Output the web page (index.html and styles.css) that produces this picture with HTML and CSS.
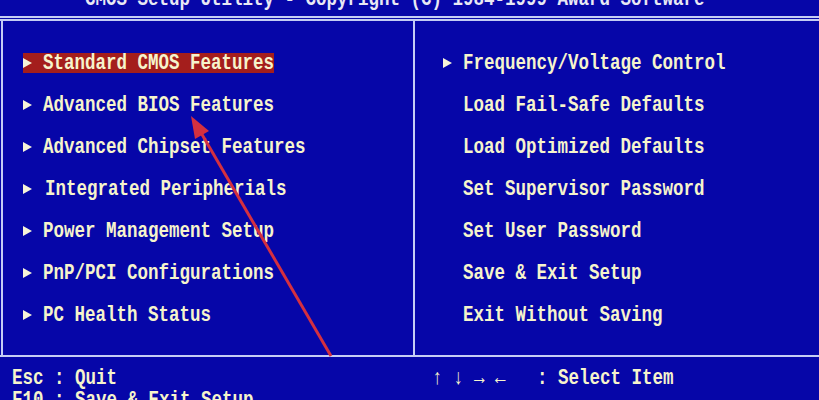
FILE: index.html
```html
<!DOCTYPE html>
<html>
<head>
<meta charset="utf-8">
<link rel="stylesheet" href="styles.css">
</head>
<body>
<div class="screen">
  <div class="title"><span class="t">CMOS Setup Utility - Copyright (C) 1984-1999 Award Software</span></div>
  <div class="main">
    <ul class="col left">
      <li class="item"><span class="sel"><svg class="arr" viewBox="0 0 9 10"><polygon points="0,0 9,5 0,10"/></svg><span class="t">Standard CMOS Features</span></span></li>
      <li class="item"><span class="opt"><svg class="arr" viewBox="0 0 9 10"><polygon points="0,0 9,5 0,10"/></svg><span class="t">Advanced BIOS Features</span></span></li>
      <li class="item"><span class="opt"><svg class="arr" viewBox="0 0 9 10"><polygon points="0,0 9,5 0,10"/></svg><span class="t">Advanced Chipset Features</span></span></li>
      <li class="item"><span class="opt"><svg class="arr" viewBox="0 0 9 10"><polygon points="0,0 9,5 0,10"/></svg><span class="t shift">Integrated Peripherials</span></span></li>
      <li class="item"><span class="opt"><svg class="arr" viewBox="0 0 9 10"><polygon points="0,0 9,5 0,10"/></svg><span class="t">Power Management Setup</span></span></li>
      <li class="item"><span class="opt"><svg class="arr" viewBox="0 0 9 10"><polygon points="0,0 9,5 0,10"/></svg><span class="t">PnP/PCI Configurations</span></span></li>
      <li class="item"><span class="opt"><svg class="arr" viewBox="0 0 9 10"><polygon points="0,0 9,5 0,10"/></svg><span class="t">PC Health Status</span></span></li>
    </ul>
    <ul class="col right">
      <li class="item"><span class="opt"><svg class="arr" viewBox="0 0 9 10"><polygon points="0,0 9,5 0,10"/></svg><span class="t">Frequency/Voltage Control</span></span></li>
      <li class="item"><span class="opt"><span class="noarr"></span><span class="t">Load Fail-Safe Defaults</span></span></li>
      <li class="item"><span class="opt"><span class="noarr"></span><span class="t">Load Optimized Defaults</span></span></li>
      <li class="item"><span class="opt"><span class="noarr"></span><span class="t">Set Supervisor Password</span></span></li>
      <li class="item"><span class="opt"><span class="noarr"></span><span class="t">Set User Password</span></span></li>
      <li class="item"><span class="opt"><span class="noarr"></span><span class="t">Save &amp; Exit Setup</span></span></li>
      <li class="item"><span class="opt"><span class="noarr"></span><span class="t">Exit Without Saving</span></span></li>
    </ul>
  </div>
  <div class="help">
    <div class="hcol hleft">
      <div class="ln"><span class="t">Esc : Quit</span></div>
      <div class="ln"><span class="t">F10 : Save &amp; Exit Setup</span></div>
    </div>
    <div class="hcol hright">
      <div class="ln"><span class="t">↑ ↓ → ←&nbsp;&nbsp;&nbsp;: Select Item</span></div>
    </div>
  </div>
  <svg class="pointer" viewBox="0 0 819 400" width="819" height="400">
    <line x1="331" y1="356" x2="200" y2="131" />
    <polygon points="191,116 195,139 209,131" />
  </svg>
</div>
</body>
</html>
```
FILE: styles.css
```css
html, body {
  margin: 0;
  padding: 0;
  background: #0606a8;
}
body {
  width: 819px;
  height: 400px;
  overflow: hidden;
  font-family: "Liberation Mono", "DejaVu Sans Mono", monospace;
  font-weight: bold;
  font-size: 17.5px;
  color: #f6f4cc;
}
.screen {
  position: relative;
  width: 819px;
  height: 400px;
  overflow: hidden;
}
.t {
  display: inline-block;
  white-space: pre;
  transform: scaleY(1.22);
  transform-origin: 50% 50%;
}
.shift {
  margin-left: 2px;
}
.title {
  height: 16px;
  border-bottom: 5px double #c4ccf4;
  padding-left: 85px;
  color: #e8e8f4;
  line-height: 20px;
}
.title .t {
  margin-top: -11px;
  vertical-align: top;
}
.main {
  display: grid;
  grid-template-columns: 412px 1fr;
  height: 334px;
  margin-left: 1px;
  border-left: 2px solid #c4ccf4;
}
.col {
  list-style: none;
  margin: 0;
  padding: 21px 0 0 0;
}
.left {
  border-right: 2px solid #c4ccf4;
  padding-left: 20px;
}
.right {
  padding-left: 28px;
}
.item {
  height: 42px;
  display: flex;
  align-items: center;
}
.sel, .opt {
  display: inline-flex;
  align-items: center;
  height: 20px;
  line-height: 20px;
  gap: 11px;
}
.sel {
  background: #a41e1c;
}
.arr {
  width: 9px;
  height: 10px;
  fill: #f6f4d8;
  flex: none;
}
.noarr {
  width: 9px;
  flex: none;
}
.help {
  display: grid;
  grid-template-columns: 420px 1fr;
  border-top: 2px solid #c4ccf4;
  padding-top: 10px;
}
.hcol {
  padding-left: 12px;
}
.ln {
  height: 22px;
  line-height: 22px;
}
.pointer {
  position: absolute;
  left: 0;
  top: 0;
  pointer-events: none;
}
.pointer line {
  stroke: #d43040;
  stroke-width: 3;
}
.pointer polygon {
  fill: #d43040;
}
```
